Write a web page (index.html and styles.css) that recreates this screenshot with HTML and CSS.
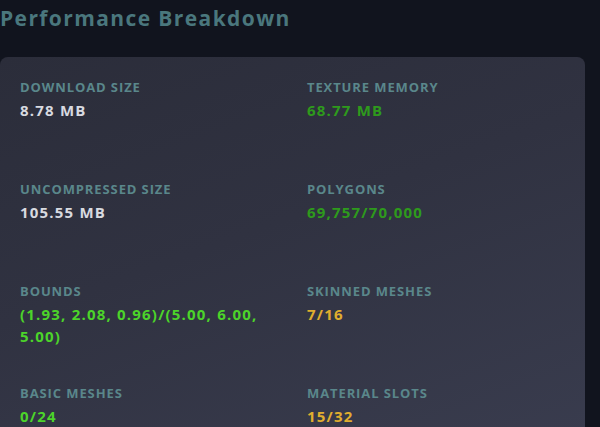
FILE: index.html
```html
<!DOCTYPE html>
<html>
<head>
<meta charset="utf-8">
<link rel="stylesheet" href="styles.css">
</head>
<body>
<div class="page">
  <h1 class="title">Performance Breakdown</h1>
  <div class="panel">
    <div class="stat">
      <div class="label">Download Size</div>
      <div class="value white">8.78 MB</div>
    </div>
    <div class="stat">
      <div class="label">Texture Memory</div>
      <div class="value green">68.77 MB</div>
    </div>
    <div class="stat">
      <div class="label">Uncompressed Size</div>
      <div class="value white">105.55 MB</div>
    </div>
    <div class="stat">
      <div class="label">Polygons</div>
      <div class="value green">69,757/70,000</div>
    </div>
    <div class="stat">
      <div class="label">Bounds</div>
      <div class="value lime">(1.93, 2.08, 0.96)/(5.00, 6.00, 5.00)</div>
    </div>
    <div class="stat">
      <div class="label">Skinned Meshes</div>
      <div class="value yellow">7/16</div>
    </div>
    <div class="stat">
      <div class="label">Basic Meshes</div>
      <div class="value lime">0/24</div>
    </div>
    <div class="stat">
      <div class="label">Material Slots</div>
      <div class="value yellow">15/32</div>
    </div>
  </div>
</div>
</body>
</html>
```
FILE: styles.css
```css
html, body {
  margin: 0;
  padding: 0;
  background: #11141e;
  height: 100%;
  overflow: hidden;
}
.page {
  font-family: "Open Sans", "Noto Sans", sans-serif;
  padding-top: 4px;
}
.title {
  margin: 0;
  font-size: 21px;
  line-height: 28px;
  font-weight: 700;
  color: #4a777d;
  letter-spacing: 1.4px;
}
.panel {
  margin-top: 25px;
  width: 585px;
  box-sizing: border-box;
  border-radius: 8px;
  background: linear-gradient(160deg, #2b2d3a 0%, #303241 45%, #393c4e 100%);
  padding: 21px 0 0 20px;
  display: grid;
  grid-template-columns: 267px 258px;
  column-gap: 20px;
  grid-auto-rows: 80px;
  row-gap: 22px;
  height: 380px;
}
.label {
  font-size: 13px;
  line-height: 18px;
  font-weight: 700;
  letter-spacing: 0.9px;
  text-transform: uppercase;
  color: #5a878b;
}
.value {
  margin-top: 3px;
  font-size: 15px;
  line-height: 22px;
  font-weight: 700;
  letter-spacing: 1.2px;
}
.white { color: #d8dae0; }
.green { color: #2e9a1c; }
.lime { color: #4cd42a; }
.yellow { color: #e0ae2e; }
```
